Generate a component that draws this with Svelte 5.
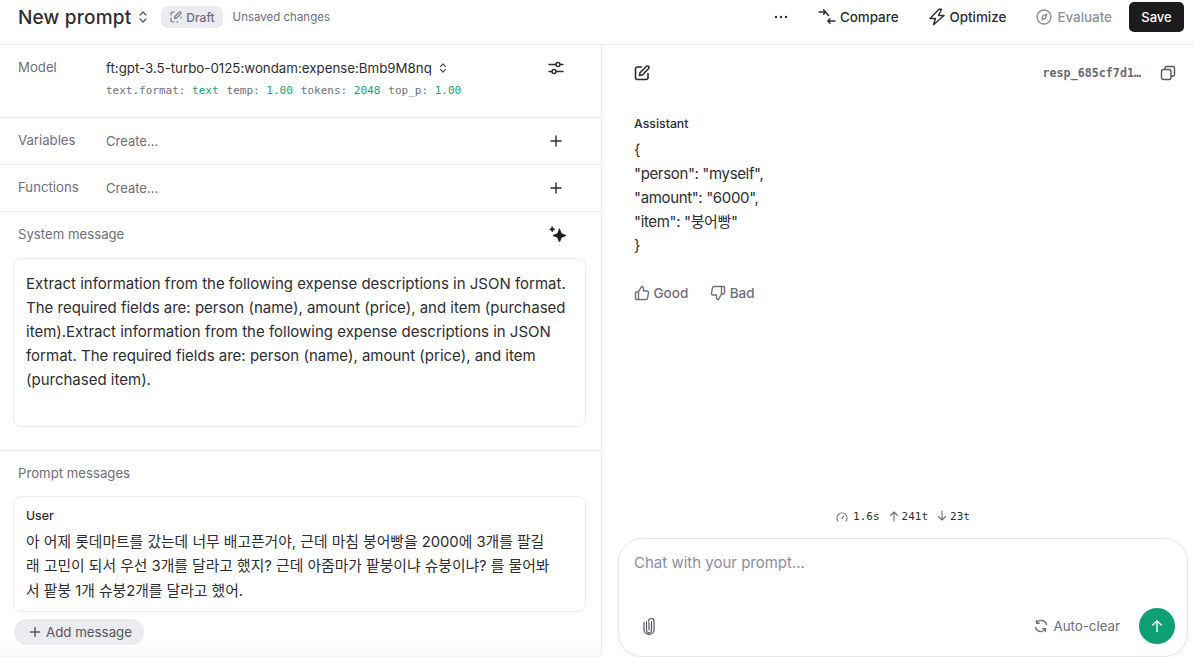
<script>
	const params = [
		['text.format:', 'text'],
		['temp:', '1.00'],
		['tokens:', '2048'],
		['top_p:', '1.00']
	];
	const jsonLines = ['{', '"person": "myself",', '"amount": "6000",', '"item": "붕어빵"', '}'];
</script>

<div class="page">
	<header class="topbar">
		<div class="title-group">
			<h1>New prompt</h1>
			<svg class="chevrons" width="12" height="16" viewBox="0 0 12 16"><path d="M3 6l3-3 3 3M3 10l3 3 3-3" /></svg>
			<span class="draft">
				<svg width="12" height="12" viewBox="0 0 12 12"><path d="M4 1H2.500A1.500 1.500 0 0 0 1 2.500V4M1 7v2.500A1.500 1.500 0 0 0 2.500 11H4M7 11h1M4.500 7.500l.4-2L9 1.300a1 1 0 0 1 1.600 1.500L6.500 7.100zM11 6v1" /></svg>
				Draft
			</span>
			<span class="unsaved">Unsaved changes</span>
		</div>
		<div class="actions">
			<svg class="more" width="14" height="14" viewBox="0 0 14 14"><circle cx="2" cy="7" r="1.200" /><circle cx="7" cy="7" r="1.200" /><circle cx="12" cy="7" r="1.200" /></svg>
			<button class="action compare">
				<svg width="18" height="18" viewBox="0 0 18 18"><path d="M1 4h6.500M5.500 1.800L7.800 4 5.500 6.200M7.500 4l3 3.500M17 13h-7M12 10.800L9.800 13l2.200 2.200" /></svg>
				Compare
			</button>
			<button class="action optimize">
				<svg width="16" height="18" viewBox="0 0 16 18"><path d="M10 1.200L1 10.500H6.500L4.500 16.800 15 7.500H9.500L12.500 1.200z" /></svg>
				Optimize
			</button>
			<button class="action evaluate">
				<svg width="16" height="16" viewBox="0 0 16 16"><circle cx="8" cy="8" r="7" /><path d="M10.800 5.200L9.600 9 6 10.800 6.800 6.800z" /></svg>
				Evaluate
			</button>
			<button class="save">Save</button>
		</div>
	</header>

	<main class="panes">
		<section class="left">
			<div class="row model-row">
				<span class="row-label">Model</span>
				<div class="model-info">
					<div class="model-name">
						ft:gpt-3.5-turbo-0125:wondam:expense:Bmb9M8nq
						<svg class="chevrons small" width="10" height="14" viewBox="0 0 10 14"><path d="M2.500 5.500L5 3l2.500 2.500M2.500 8.500L5 11l2.500-2.500" /></svg>
					</div>
					<div class="params">
						{#each params as [key, value]}
							<span class="param">{key} <b>{value}</b></span>
						{/each}
					</div>
				</div>
				<svg class="row-icon tune" width="16" height="16" viewBox="0 0 16 16"><path d="M1 4.500h7M12 4.500h3M1 11.500h3M8 11.500h7" /><circle cx="10" cy="4.500" r="2" /><circle cx="6" cy="11.500" r="2" /></svg>
			</div>

			<div class="row simple-row">
				<span class="row-label">Variables</span>
				<span class="create">Create...</span>
				<svg class="row-icon" width="12" height="12" viewBox="0 0 12 12"><path d="M6 1v10M1 6h10" /></svg>
			</div>

			<div class="row simple-row">
				<span class="row-label">Functions</span>
				<span class="create">Create...</span>
				<svg class="row-icon" width="12" height="12" viewBox="0 0 12 12"><path d="M6 1v10M1 6h10" /></svg>
			</div>

			<div class="system">
				<div class="section-head">
					<span class="row-label">System message</span>
					<svg class="sparkle" width="18" height="18" viewBox="0 0 18 18"><path d="M10.500 3L12.400 7.600 17 9.500 12.400 11.400 10.500 16 8.600 11.400 4 9.500 8.600 7.600zM3.200 .8L4 2.500 5.700 3.300 4 4.100 3.200 5.800 2.400 4.100 .7 3.300 2.400 2.500z" /></svg>
				</div>
				<div class="card system-card">
					Extract information from the following expense descriptions in JSON format. The required fields are: person (name), amount (price), and item (purchased item).Extract information from the following expense descriptions in JSON format. The required fields are: person (name), amount (price), and item (purchased item).
				</div>
			</div>

			<div class="prompts">
				<span class="row-label">Prompt messages</span>
				<div class="card user-card">
					<div class="role">User</div>
					<p>아 어제 롯데마트를 갔는데 너무 배고픈거야, 근데 마침 붕어빵을 2000에 3개를 팔길래 고민이 되서 우선 3개를 달라고 했지? 근데 아줌마가 팥붕이냐 슈붕이냐? 를 물어봐서 팥붕 1개 슈붕2개를 달라고 했어.</p>
				</div>
				<button class="add">
					<svg width="12" height="12" viewBox="0 0 12 12"><path d="M6 1.500v9M1.500 6h9" /></svg>
					Add message
				</button>
				<div class="fade"></div>
			</div>
		</section>

		<section class="right">
			<div class="resp-head">
				<svg class="edit" width="16" height="16" viewBox="0 0 16 16"><path d="M7.500 2H3.500A2 2 0 0 0 1.500 4v8.500a2 2 0 0 0 2 2H12a2 2 0 0 0 2-2V8.500M5.500 10.500l.5-2.800 6.200-6.200a1.500 1.500 0 0 1 2.300 2.200L8.300 10z" /></svg>
				<div class="resp-id">
					<code>resp_685cf7d1…</code>
					<svg width="16" height="16" viewBox="0 0 16 16"><rect x="1.500" y="4.500" width="9.500" height="10" rx="2" /><path d="M5 4.500V3a1.500 1.500 0 0 1 1.500-1.500h6.500A1.500 1.500 0 0 1 14.500 3v6.500A1.500 1.500 0 0 1 13 11h-2" /></svg>
				</div>
			</div>

			<div class="reply">
				<div class="role">Assistant</div>
				<div class="json">
					{#each jsonLines as line}
						<div>{line}</div>
					{/each}
				</div>
				<div class="feedback">
					<button class="good">
						<svg width="16" height="16" viewBox="0 0 16 16"><path d="M4.500 7v7.500H2.500a1 1 0 0 1-1-1V8a1 1 0 0 1 1-1zM4.500 7l3-5.500a1.800 1.800 0 0 1 2 1.800V6h3.500a1.500 1.500 0 0 1 1.500 1.800l-1 5.500a1.500 1.500 0 0 1-1.500 1.200H4.500" /></svg>
						Good
					</button>
					<button class="bad">
						<svg width="16" height="16" viewBox="0 0 16 16"><path d="M11.500 9V1.500h2a1 1 0 0 1 1 1V8a1 1 0 0 1-1 1zM11.500 9l-3 5.500a1.800 1.800 0 0 1-2-1.800V10H3a1.500 1.500 0 0 1-1.500-1.800l1-5.500A1.500 1.500 0 0 1 4 1.500h7.500" /></svg>
						Bad
					</button>
				</div>
			</div>

			<div class="stats">
				<span class="stat">
					<svg width="12" height="12" viewBox="0 0 12 12"><path d="M2 11A5 5 0 1 1 10 11M6 8.500l1.500-2.500" /></svg>
					1.6s
				</span>
				<span class="stat">
					<svg width="10" height="12" viewBox="0 0 10 12"><path d="M5 11V2M1.500 5.500L5 2l3.500 3.500" /></svg>
					241t
				</span>
				<span class="stat">
					<svg width="10" height="12" viewBox="0 0 10 12"><path d="M5 1v9M1.500 6.500L5 10l3.500-3.500" /></svg>
					23t
				</span>
			</div>

			<div class="composer">
				<div class="placeholder">Chat with your prompt...</div>
				<div class="composer-bar">
					<svg class="clip" width="16" height="18" viewBox="0 0 16 18"><path d="M8 5.500v7.300M5.500 4.500v8.800a2.500 2.500 0 0 0 5 0V4.500M3 5.500v7.800a5 4 0 0 0 10 0V4.200a2.700 2.700 0 0 0-5.400 0" /></svg>
					<div class="composer-right">
						<span class="autoclear">
							<svg width="14" height="14" viewBox="0 0 14 14"><path d="M12.500 5.500A5.500 5.500 0 0 0 2.500 4M1.500 8.500A5.500 5.500 0 0 0 11.500 10M2.500 1.500V4.200h2.700M11.500 12.500V9.800H8.800" /></svg>
							Auto-clear
						</span>
						<button class="send" aria-label="Send">
							<svg width="14" height="14" viewBox="0 0 14 14"><path d="M7 12.500V2M2.800 6L7 1.800 11.200 6" /></svg>
						</button>
					</div>
				</div>
			</div>
		</section>
	</main>
</div>

<style>
	:global(body) {
		margin: 0;
		background: #fff;
		font-family: Inter, 'Noto Sans CJK KR', sans-serif;
		color: #2d2d32;
	}

	svg {
		fill: none;
		stroke: currentColor;
		stroke-width: 1.4;
		stroke-linecap: round;
		stroke-linejoin: round;
		flex: none;
	}

	button {
		font: inherit;
		border: none;
		background: none;
		padding: 0;
		color: inherit;
		display: inline-flex;
		align-items: center;
	}

	.page {
		height: 657px;
		display: flex;
		flex-direction: column;
		overflow: hidden;
	}

	.topbar {
		height: 34px;
		flex: none;
		border-bottom: 1px solid #ececf1;
		display: flex;
		align-items: center;
		justify-content: space-between;
		padding: 0 10px 10px 18px;
	}

	.title-group {
		display: flex;
		align-items: center;
	}

	h1 {
		margin: 0;
		font-size: 19px;
		font-weight: 500;
		color: #2d2d32;
		letter-spacing: 0.2px;
	}

	.chevrons {
		color: #55555f;
		margin-left: 6px;
		stroke-width: 1.2;
	}

	.draft {
		margin-left: 12px;
		height: 22px;
		padding: 0 8px 0 9px;
		border-radius: 7px;
		background: #ebebf0;
		color: #6e6e80;
		font-size: 12px;
		font-weight: 500;
		display: flex;
		align-items: center;
		gap: 4px;
	}

	.draft svg {
		stroke-width: 1.1;
	}

	.unsaved {
		margin-left: 10px;
		font-size: 11.500px;
		color: #6e6e80;
	}

	.actions {
		display: flex;
		align-items: center;
		gap: 30px;
	}

	.more {
		fill: #2d2d32;
		stroke: none;
	}

	.action {
		font-size: 13.400px;
		font-weight: 500;
		gap: 5px;
		color: #2d2d32;
	}

	.compare {
		gap: 4px;
	}

	.evaluate {
		color: #8e8ea0;
		margin-right: -13px;
	}

	.save {
		height: 30px;
		width: 55px;
		justify-content: center;
		border-radius: 5px;
		background: #1c1c1f;
		color: #fff;
		font-size: 13px;
		font-weight: 500;
	}

	.panes {
		flex: 1;
		display: flex;
		min-height: 0;
	}

	.left {
		width: 601px;
		flex: none;
		border-right: 1px solid #ececf1;
		display: flex;
		flex-direction: column;
	}

	.row {
		display: flex;
		border-bottom: 1px solid #ececf1;
		padding: 0 37px 0 18px;
	}

	.row-label {
		font-size: 13.200px;
		color: #6e6e80;
	}

	.model-row {
		padding-top: 14px;
		box-sizing: border-box;
		height: 73px;
	}

	.model-row .row-label {
		width: 88px;
		flex: none;
	}

	.model-info {
		flex: 1;
	}

	.model-name {
		font-size: 13.300px;
		color: #2d2d32;
		display: flex;
		align-items: center;
		gap: 6px;
		height: 18px;
	}

	.chevrons.small {
		margin-left: 0;
	}

	.params {
		margin-top: 7px;
		display: flex;
		gap: 8px;
		font-family: 'DejaVu Sans Mono', monospace;
		font-size: 11px;
		color: #6e6e80;
	}

	.params b {
		font-weight: 400;
		color: #10a37f;
	}

	.row-icon {
		color: #2d2d32;
		margin-top: 1px;
	}

	.simple-row {
		height: 47px;
		box-sizing: border-box;
		align-items: center;
	}

	.simple-row .row-label {
		width: 88px;
		flex: none;
		margin-top: -2px;
	}

	.create {
		flex: 1;
		font-size: 13px;
		color: #6e6e80;
	}

	.simple-row .row-icon {
		margin: 0 2px 0 0;
	}

	.system {
		height: 239px;
		box-sizing: border-box;
		border-bottom: 1px solid #ececf1;
		padding: 0 15px 0 13px;
	}

	.section-head {
		height: 46px;
		display: flex;
		align-items: center;
		justify-content: space-between;
		padding: 0 19px 3px 5px;
		box-sizing: border-box;
	}

	.sparkle {
		fill: #1c1c1f;
		stroke: #1c1c1f;
		stroke-width: 0.8;
		margin-top: 2px;
	}

	.card {
		border: 1px solid #ececf1;
		border-radius: 8px;
		box-sizing: border-box;
	}

	.system-card {
		height: 169px;
		padding: 13px 12px 0;
		font-size: 15px;
		line-height: 24px;
		color: #2d2d32;
	}

	.prompts {
		position: relative;
		flex: 1;
		padding: 14px 15px 0 13px;
		min-height: 0;
	}

	.prompts > .row-label {
		display: block;
		margin-left: 5px;
		height: 16px;
		line-height: 16px;
	}

	.user-card {
		margin-top: 15px;
		height: 116px;
		padding: 11px 12px;
	}

	.role {
		font-size: 12.300px;
		font-weight: 500;
		color: #2d2d32;
		line-height: 16px;
	}

	.user-card p {
		margin: 5.500px 23px 0 0;
		font-size: 14.800px;
		line-height: 24.500px;
		color: #2d2d32;
	}

	.add {
		margin: 7px 0 0 1px;
		height: 26px;
		padding: 0 12px 0 14.500px;
		gap: 5.500px;
		border-radius: 13px;
		background: #ebebf0;
		font-size: 13.300px;
		color: #55555f;
	}

	.fade {
		position: absolute;
		left: 0;
		right: 0;
		bottom: 0;
		height: 14px;
		background: linear-gradient(to bottom, rgba(255, 255, 255, 0), rgba(244, 244, 246, 0.7));
		pointer-events: none;
	}

	.right {
		flex: 1;
		min-width: 0;
		display: flex;
		flex-direction: column;
		padding: 0 6px 0 16px;
	}

	.resp-head {
		height: 56px;
		flex: none;
		display: flex;
		align-items: center;
		justify-content: space-between;
		padding: 0 12px 0 16px;
		color: #2d2d32;
	}

	.edit {
		stroke-width: 1.6;
	}

	.resp-id {
		display: flex;
		align-items: center;
		gap: 19px;
		color: #55555f;
	}

	.resp-id code {
		font-family: 'DejaVu Sans Mono', monospace;
		font-size: 11.700px;
		font-weight: 700;
		color: #686876;
	}

	.reply {
		flex: 1;
		padding: 15px 16px 0;
		min-height: 0;
	}

	.json {
		margin-top: 6px;
		font-size: 15px;
		line-height: 24px;
		letter-spacing: -0.35px;
		color: #2d2d32;
	}

	.feedback {
		margin-top: 27px;
		display: flex;
		gap: 22px;
		font-size: 13.500px;
		font-weight: 500;
		color: #6e6e80;
	}

	.feedback button {
		gap: 3.500px;
	}

	.stats {
		flex: none;
		height: 16px;
		margin-bottom: 14px;
		display: flex;
		justify-content: center;
		gap: 9px;
		font-family: 'DejaVu Sans Mono', monospace;
		font-size: 11px;
		color: #2d2d32;
	}

	.stat {
		display: inline-flex;
		align-items: center;
		gap: 3px;
	}

	.stat:first-child {
		gap: 5px;
	}

	.stat svg {
		color: #6e6e80;
		stroke-width: 1.1;
	}

	.composer {
		flex: none;
		height: 119px;
		box-sizing: border-box;
		border: 1px solid #e5e5ea;
		border-radius: 24px;
		padding: 15px 12px 12px 15px;
		display: flex;
		flex-direction: column;
		justify-content: space-between;
		box-shadow: 0 2px 6px rgba(0, 0, 0, 0.04);
	}

	.placeholder {
		font-size: 15px;
		line-height: 18px;
		color: #8e8ea0;
	}

	.composer-bar {
		display: flex;
		align-items: center;
		justify-content: space-between;
		padding-left: 7px;
	}

	.clip {
		color: #55555f;
		stroke-width: 1.2;
	}

	.composer-right {
		display: flex;
		align-items: center;
		gap: 19px;
	}

	.autoclear {
		display: flex;
		align-items: center;
		gap: 5px;
		font-size: 13.300px;
		color: #6e6e80;
	}

	.send {
		width: 36px;
		height: 36px;
		border-radius: 50%;
		justify-content: center;
		background: #0e9f73;
		color: #fff;
	}
</style>
